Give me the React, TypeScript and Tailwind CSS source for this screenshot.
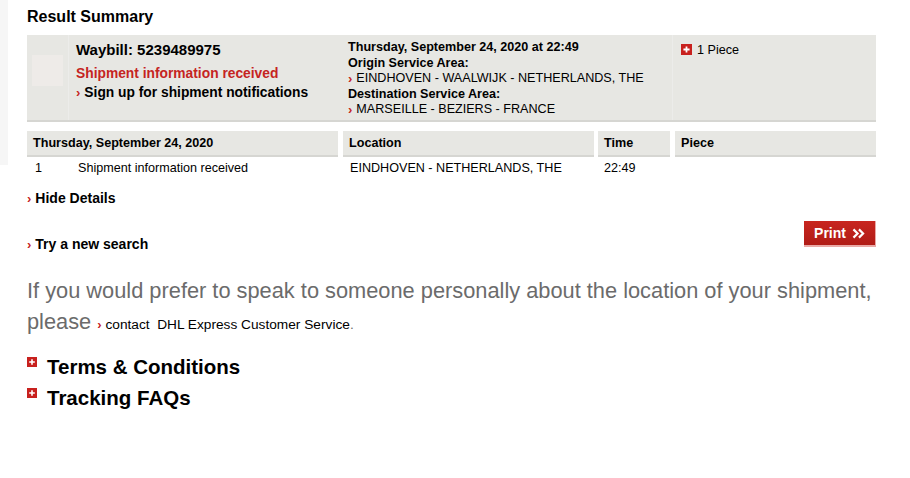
import React from 'react'

const red = 'text-[#c5241f]'

function Chevron() {
  return <span className={`${red} font-bold text-[13px] mr-[4px]`}>›</span>
}

function PlusBox({ size = 'w-[11px] h-[11px]' }: { size?: string }) {
  return (
    <span className={`${size} bg-[#c8211e] inline-flex items-center justify-center shrink-0`}>
      <svg viewBox="0 0 10 10" className="w-full h-full">
        <path d="M5 2.2v5.6M2.2 5h5.6" stroke="#fff" strokeWidth="1.6" />
      </svg>
    </span>
  )
}

export default function App() {
  return (
    <div className="w-[910px] h-[478px] bg-white flex font-['Liberation_Sans',Arial,sans-serif] text-black overflow-hidden">
      <div className="w-[8px] h-[165px] bg-[#f6f6f6] shrink-0" />
      <div className="pl-[19px] w-[868px]">
        <h2 className="text-[16px] font-bold leading-[18px] pt-[8px]">Result Summary</h2>

        {/* summary box */}
        <div className="mt-[9px] flex bg-[#e7e7e3] border-b-2 border-[#d6d6d2] h-[87px]">
          <div className="w-[42px] border-r border-[#ececea] pl-[5px] pt-[20px]">
            <div className="w-[31px] h-[31px] bg-[#eeebe8]" />
          </div>
          <div className="w-[273px] pl-[7px] pt-[5px] text-[14px] font-bold leading-[19px]">
            <div className="text-[15px]">Waybill: 5239489975</div>
            <div className={`${red} mt-[5px] text-[13.8px]`}>Shipment information received</div>
            <div className="flex items-center text-[13.8px]">
              <Chevron />
              Sign up for shipment notifications
            </div>
          </div>
          <div className="w-[331px] pl-[6px] pt-[5px] text-[12.6px] leading-[15.5px] border-r border-[#ececea]">
            <div className="font-bold">Thursday, September 24, 2020 at 22:49</div>
            <div className="font-bold">Origin Service Area:</div>
            <div className="flex items-center">
              <Chevron />
              EINDHOVEN - WAALWIJK - NETHERLANDS, THE
            </div>
            <div className="font-bold">Destination Service Area:</div>
            <div className="flex items-center">
              <Chevron />
              MARSEILLE - BEZIERS - FRANCE
            </div>
          </div>
          <div className="flex-1 pl-[8px] pt-[9px] text-[12.6px] leading-[15px] flex items-start gap-[5px]">
            <PlusBox />
            <span className="-mt-[1px]">1 Piece</span>
          </div>
        </div>

        {/* details table */}
        <div className="mt-[9px] flex text-[12.6px] font-bold h-[26px]">
          <div className="w-[311px] bg-[#e7e7e3] border-b-2 border-[#d6d6d2] pl-[6px] flex items-center">
            Thursday, September 24, 2020
          </div>
          <div className="w-[251px] ml-[5px] bg-[#e7e7e3] border-b-2 border-[#d6d6d2] pl-[6px] flex items-center">
            Location
          </div>
          <div className="w-[72px] ml-[4px] bg-[#e7e7e3] border-b-2 border-[#d6d6d2] pl-[6px] flex items-center">
            Time
          </div>
          <div className="w-[201px] ml-[5px] bg-[#e7e7e3] border-b-2 border-[#d6d6d2] pl-[6px] flex items-center">
            Piece
          </div>
        </div>
        <div className="flex text-[12.6px] h-[23px] items-center">
          <div className="w-[43px] pl-[8px]">1</div>
          <div className="w-[273px] pl-[8px]">Shipment information received</div>
          <div className="w-[255px] pl-[7px]">EINDHOVEN - NETHERLANDS, THE</div>
          <div className="w-[76px] pl-[6px]">22:49</div>
        </div>

        <div className="mt-[10px] flex items-center text-[14px] font-bold leading-[17px]">
          <Chevron />
          Hide Details
        </div>

        <div className="mt-[14px] flex justify-between items-start">
          <div className="mt-[15px] flex items-center text-[14px] font-bold leading-[17px]">
            <Chevron />
            Try a new search
          </div>
          <button className="w-[72px] h-[26px] bg-gradient-to-b from-[#c8261f] to-[#b01c17] border-b-2 border-r border-[#e9a9a6] text-white font-bold text-[14px] flex items-center justify-center gap-[6px]">
            Print
            <svg viewBox="0 0 14 12" className="w-[13px] h-[11px]">
              <path d="M1.5 1.5l4.5 4.5-4.5 4.5M7.5 1.5l4.5 4.5-4.5 4.5" stroke="#fff" strokeWidth="2.4" fill="none" />
            </svg>
          </button>
        </div>

        <p className="mt-[22px] text-[21.8px] leading-[31px] text-[#6b6b6b] w-[860px]">
          If you would prefer to speak to someone personally about the location of your shipment, please{' '}
          <span className="inline-block text-[13.7px] leading-[16px] text-black">
            <span className={`${red} font-bold text-[13px]`}>›</span> contact&nbsp; DHL Express Customer Service
            <span className="text-[#6b6b6b]">.</span>
          </span>
        </p>

        <div className="mt-[19px] flex flex-col gap-[9px]">
          <div className="flex items-start gap-[10px]">
            <span className="mt-[1px] flex">
              <PlusBox size="w-[10px] h-[10px]" />
            </span>
            <span className="text-[20.5px] font-bold leading-[22px]">Terms &amp; Conditions</span>
          </div>
          <div className="flex items-start gap-[10px]">
            <span className="mt-[1px] flex">
              <PlusBox size="w-[10px] h-[10px]" />
            </span>
            <span className="text-[20.5px] font-bold leading-[22px]">Tracking FAQs</span>
          </div>
        </div>
      </div>
    </div>
  )
}
